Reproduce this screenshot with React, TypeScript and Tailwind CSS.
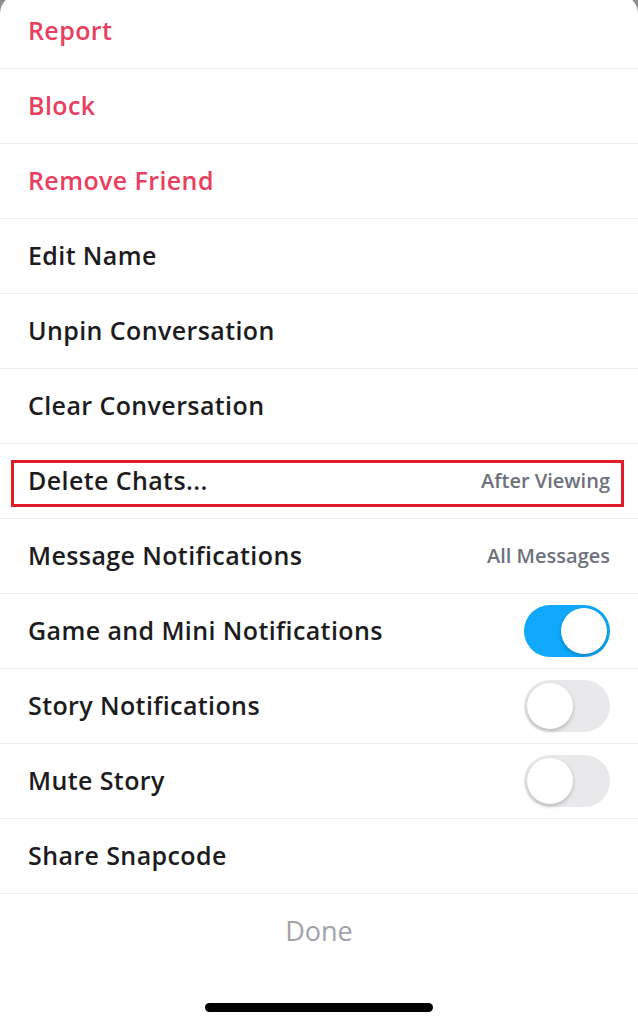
import React, { useState } from "react";

type Row = {
  label: string;
  danger?: boolean;
  value?: string;
  toggle?: boolean;
  highlight?: boolean;
};

const rows: Row[] = [
  { label: "Report", danger: true },
  { label: "Block", danger: true },
  { label: "Remove Friend", danger: true },
  { label: "Edit Name" },
  { label: "Unpin Conversation" },
  { label: "Clear Conversation" },
  { label: "Delete Chats...", value: "After Viewing", highlight: true },
  { label: "Message Notifications", value: "All Messages" },
  { label: "Game and Mini Notifications", toggle: true },
  { label: "Story Notifications", toggle: false },
  { label: "Mute Story", toggle: false },
  { label: "Share Snapcode" },
];

function Toggle({ initial }: { initial: boolean }) {
  const [on, setOn] = useState(initial);
  return (
    <button
      onClick={() => setOn(!on)}
      className={`relative w-[86px] h-[52px] rounded-full shrink-0 ${on ? "bg-[#10a8fb]" : "bg-[#e9e9eb]"}`}
    >
      <span
        className={`absolute top-[3px] w-[46px] h-[46px] rounded-full bg-white shadow-[0_2px_4px_rgba(0,0,0,0.22)] ${
          on ? "left-[37px]" : "left-[3px]"
        }`}
      />
    </button>
  );
}

export default function App() {
  return (
    <div className="w-[638px] h-[1024px] bg-[#8e8e8e] overflow-hidden font-['Open_Sans',sans-serif]">
      <div className="-mt-[6px] bg-white rounded-t-[20px] h-[1030px] flex flex-col">
        {rows.map((r) => (
          <div
            key={r.label}
            className="relative h-[75px] shrink-0 flex items-center justify-between pl-[28px] pr-[28px] border-b border-[#ececee]"
          >
            <span
              className={`text-[25px] font-semibold tracking-[0.4px] ${r.danger ? "text-[#e8405e]" : "text-[#1c1c1e]"}`}
            >
              {r.label}
            </span>
            {r.value && <span className="text-[20px] font-semibold text-[#6d717b]">{r.value}</span>}
            {r.toggle !== undefined && <Toggle initial={r.toggle} />}
            {r.highlight && (
              <div className="absolute left-[11px] right-[14px] top-[16px] bottom-[11px] border-[3px] border-[#e01b2a] pointer-events-none" />
            )}
          </div>
        ))}
        <div className="h-[74px] flex items-center justify-center">
          <span className="text-[27px] text-[#a2a2aa]">Done</span>
        </div>
        <div className="flex justify-center mt-[35px]">
          <div className="w-[228px] h-[9px] rounded-full bg-black" />
        </div>
      </div>
    </div>
  );
}
